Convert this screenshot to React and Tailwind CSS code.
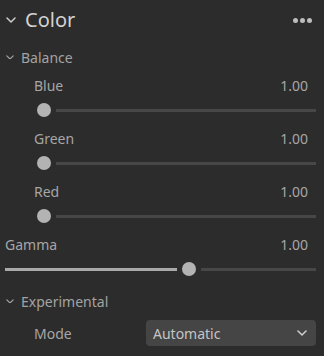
const Chevron = ({ size = 10, className = '' }) => (
  <svg width={size} height={size * 0.6} viewBox="0 0 10 6" className={className} fill="none">
    <polyline points="1,1 5,5 9,1" stroke="currentColor" strokeWidth="1.5" strokeLinecap="round" strokeLinejoin="round" />
  </svg>
);

const Slider = ({ filled = 0, className = '' }) => (
  <div className={`flex items-center h-[28px] mb-[3px] pr-[8px] ${className}`}>
    <div className="h-[3px] bg-[#a9a9a9]" style={{ width: filled }} />
    <div className="w-[14px] h-[14px] rounded-full bg-[#b3b3b3] mx-[5px] shrink-0" />
    <div className="flex-1 h-[3px] bg-[#474747]" />
  </div>
);

const Field = ({ label, value, indent = 'pl-[34px]' }) => (
  <div className={`flex items-center justify-between h-[22px] pr-[16px] text-[14px] text-[#a6a6a6] ${indent}`}>
    <span>{label}</span>
    <span>{value}</span>
  </div>
);

export default function App() {
  return (
    <div
      className="w-[324px] h-[356px] bg-[#2c2c2c] flex flex-col overflow-hidden"
      style={{ fontFamily: '"Noto Sans", sans-serif' }}
    >
      <div className="flex items-center h-[40px] pl-[6px] pr-[12px]">
        <Chevron size={10} className="text-[#cfcfcf]" />
        <span className="ml-[9px] text-[20px] text-[#d2d2d2]">Color</span>
        <div className="ml-auto flex gap-[2px]">
          <span className="w-[5px] h-[5px] rounded-full bg-[#bdbdbd]" />
          <span className="w-[5px] h-[5px] rounded-full bg-[#bdbdbd]" />
          <span className="w-[5px] h-[5px] rounded-full bg-[#bdbdbd]" />
        </div>
      </div>

      <div className="flex items-center h-[26px] mt-[4px] pl-[6px] text-[14px] text-[#a3a3a3]">
        <Chevron size={8} className="text-[#a3a3a3]" />
        <span className="ml-[7px]">Balance</span>
      </div>

      <div className="mt-[4px]">
        <Field label="Blue" value="1.00" />
        <Slider className="pl-[32px]" />
        <Field label="Green" value="1.00" />
        <Slider className="pl-[32px]" />
        <Field label="Red" value="1.00" />
        <Slider className="pl-[32px]" />
        <Field label="Gamma" value="1.00" indent="pl-[5px]" />
        <Slider className="pl-[5px]" filled={172} />
      </div>

      <div className="flex items-center h-[26px] mt-[2px] pl-[6px] text-[14px] text-[#a3a3a3]">
        <Chevron size={8} className="text-[#a3a3a3]" />
        <span className="ml-[7px]">Experimental</span>
      </div>

      <div className="flex items-center mt-[6px] pl-[34px] pr-[8px] text-[14px]">
        <span className="text-[#a6a6a6]">Mode</span>
        <div className="ml-auto w-[170px] h-[26px] rounded-[4px] bg-[#454545] flex items-center pl-[7px] pr-[9px] text-[#c4c4c4]">
          <span>Automatic</span>
          <Chevron size={10} className="ml-auto text-[#d0d0d0]" />
        </div>
      </div>
    </div>
  );
}
